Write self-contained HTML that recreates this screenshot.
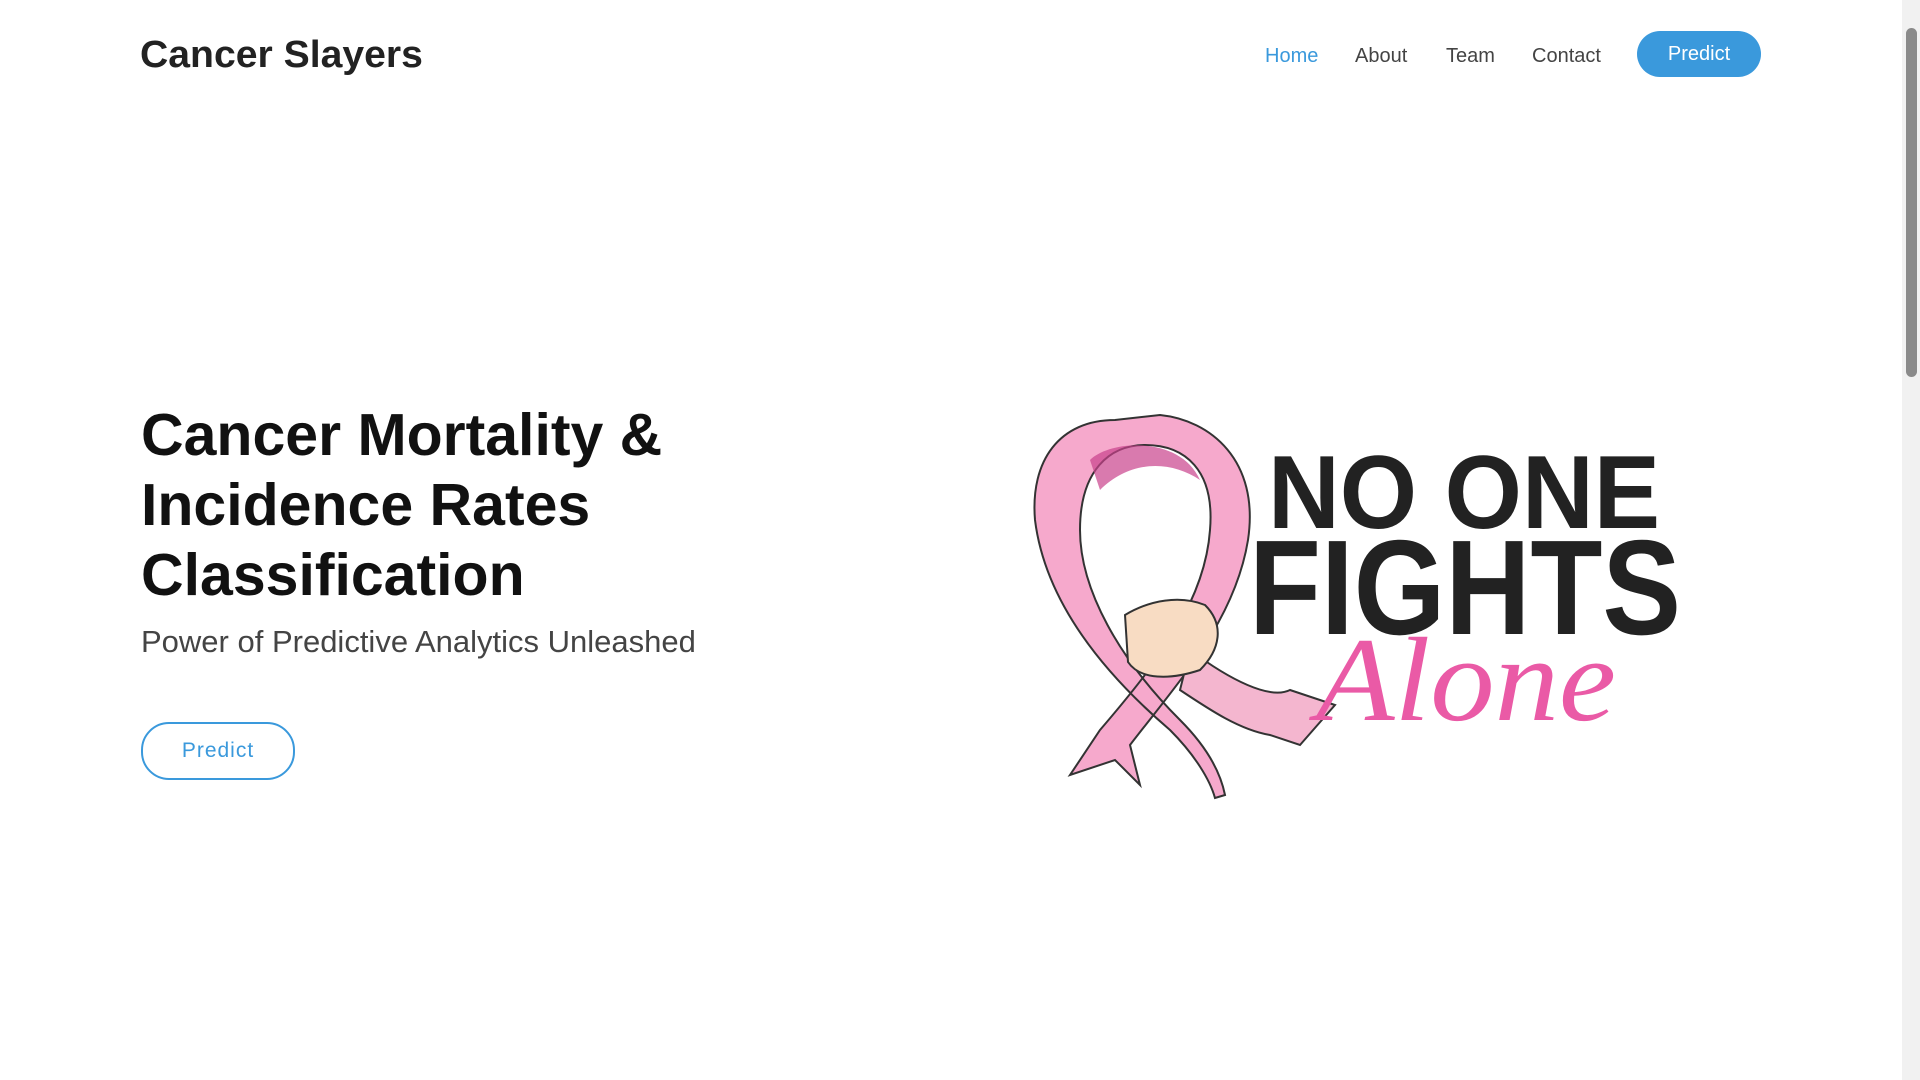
<!DOCTYPE html>
<html><head><meta charset="utf-8"><style>
html,body{margin:0;padding:0;width:1920px;height:1080px;overflow:hidden;background:#fff;font-family:"Liberation Sans",sans-serif;}
.logo{position:absolute;left:140px;top:34px;font-size:38px;font-weight:bold;color:#222;transform:scaleX(1.03);transform-origin:left;white-space:nowrap}
.nav a{position:absolute;top:45px;font-size:20px;color:#444;text-decoration:none}
.btn{position:absolute;left:1637px;top:31px;width:124px;height:46px;border-radius:23px;background:#3a99dc;color:#fff;font-size:20px;text-align:center;line-height:46px}
h1{position:absolute;left:141px;top:400px;margin:0;font-size:59px;line-height:70px;font-weight:bold;color:#111;white-space:nowrap}
.sub{position:absolute;left:141px;top:624px;font-size:31px;color:#444;white-space:nowrap}
.ob{position:absolute;left:141px;top:722px;width:150px;height:54px;border:2px solid #3a99dc;border-radius:28px;color:#3a99dc;font-size:21px;text-align:center;line-height:54px;letter-spacing:1px}
.sb{position:absolute;right:0;top:0;width:18px;height:1080px;background:#f1f1f1}
.th{position:absolute;right:3px;top:28px;width:11px;height:349px;background:#8a8a8a;border-radius:6px}
</style></head><body>
<div class="logo">Cancer Slayers</div>
<div class="nav">
<a style="left:1265px;color:#3a99dc">Home</a>
<a style="left:1355px">About</a>
<a style="left:1446px">Team</a>
<a style="left:1532px">Contact</a>
</div>
<div class="btn">Predict</div>
<h1>Cancer Mortality &amp;<br>Incidence Rates<br>Classification</h1>
<div class="sub">Power of Predictive Analytics Unleashed</div>
<div class="ob">Predict</div>
<svg style="position:absolute;left:1020px;top:400px" width="680" height="410" viewBox="0 0 680 410">
 <path d="M95 20 C40 20 10 60 15 120 C25 200 80 270 150 330 C175 355 190 380 195 398 L205 395 C200 370 185 345 160 320 C100 260 60 190 60 130 C60 70 90 45 125 45 C165 45 195 70 190 130 C185 200 140 260 80 330 L50 375 L95 360 L120 385 L110 345 C160 280 215 220 228 140 C240 60 190 20 140 15 Z" fill="#f6a9cc" stroke="#333" stroke-width="2"/>
 <path d="M70 60 C90 40 160 35 180 80 C150 60 110 60 80 90 Z" fill="#c9418c" opacity="0.7"/>
 <path d="M170 250 C210 280 250 300 270 290 L315 305 L280 345 L250 335 C220 330 190 310 160 290 Z" fill="#f4b6cf" stroke="#333" stroke-width="2"/>
 <path d="M105 215 C130 200 160 195 185 205 C205 225 200 250 180 270 C150 280 120 280 108 262 Z" fill="#f8dcc3" stroke="#333" stroke-width="2"/>
 <text x="248" y="128" font-family="Liberation Sans,sans-serif" font-weight="bold" font-size="104" fill="#222" textLength="392" lengthAdjust="spacingAndGlyphs">NO ONE</text>
 <text x="229" y="234" font-family="Liberation Sans,sans-serif" font-weight="bold" font-size="135" fill="#222" textLength="432" lengthAdjust="spacingAndGlyphs">FIGHTS</text>
 <text x="296" y="320" font-family="Liberation Serif,serif" font-style="italic" font-size="120" fill="#ea5aa6" textLength="300" lengthAdjust="spacingAndGlyphs">Alone</text>
</svg>
<div class="sb"><div class="th"></div></div>
</body></html>
